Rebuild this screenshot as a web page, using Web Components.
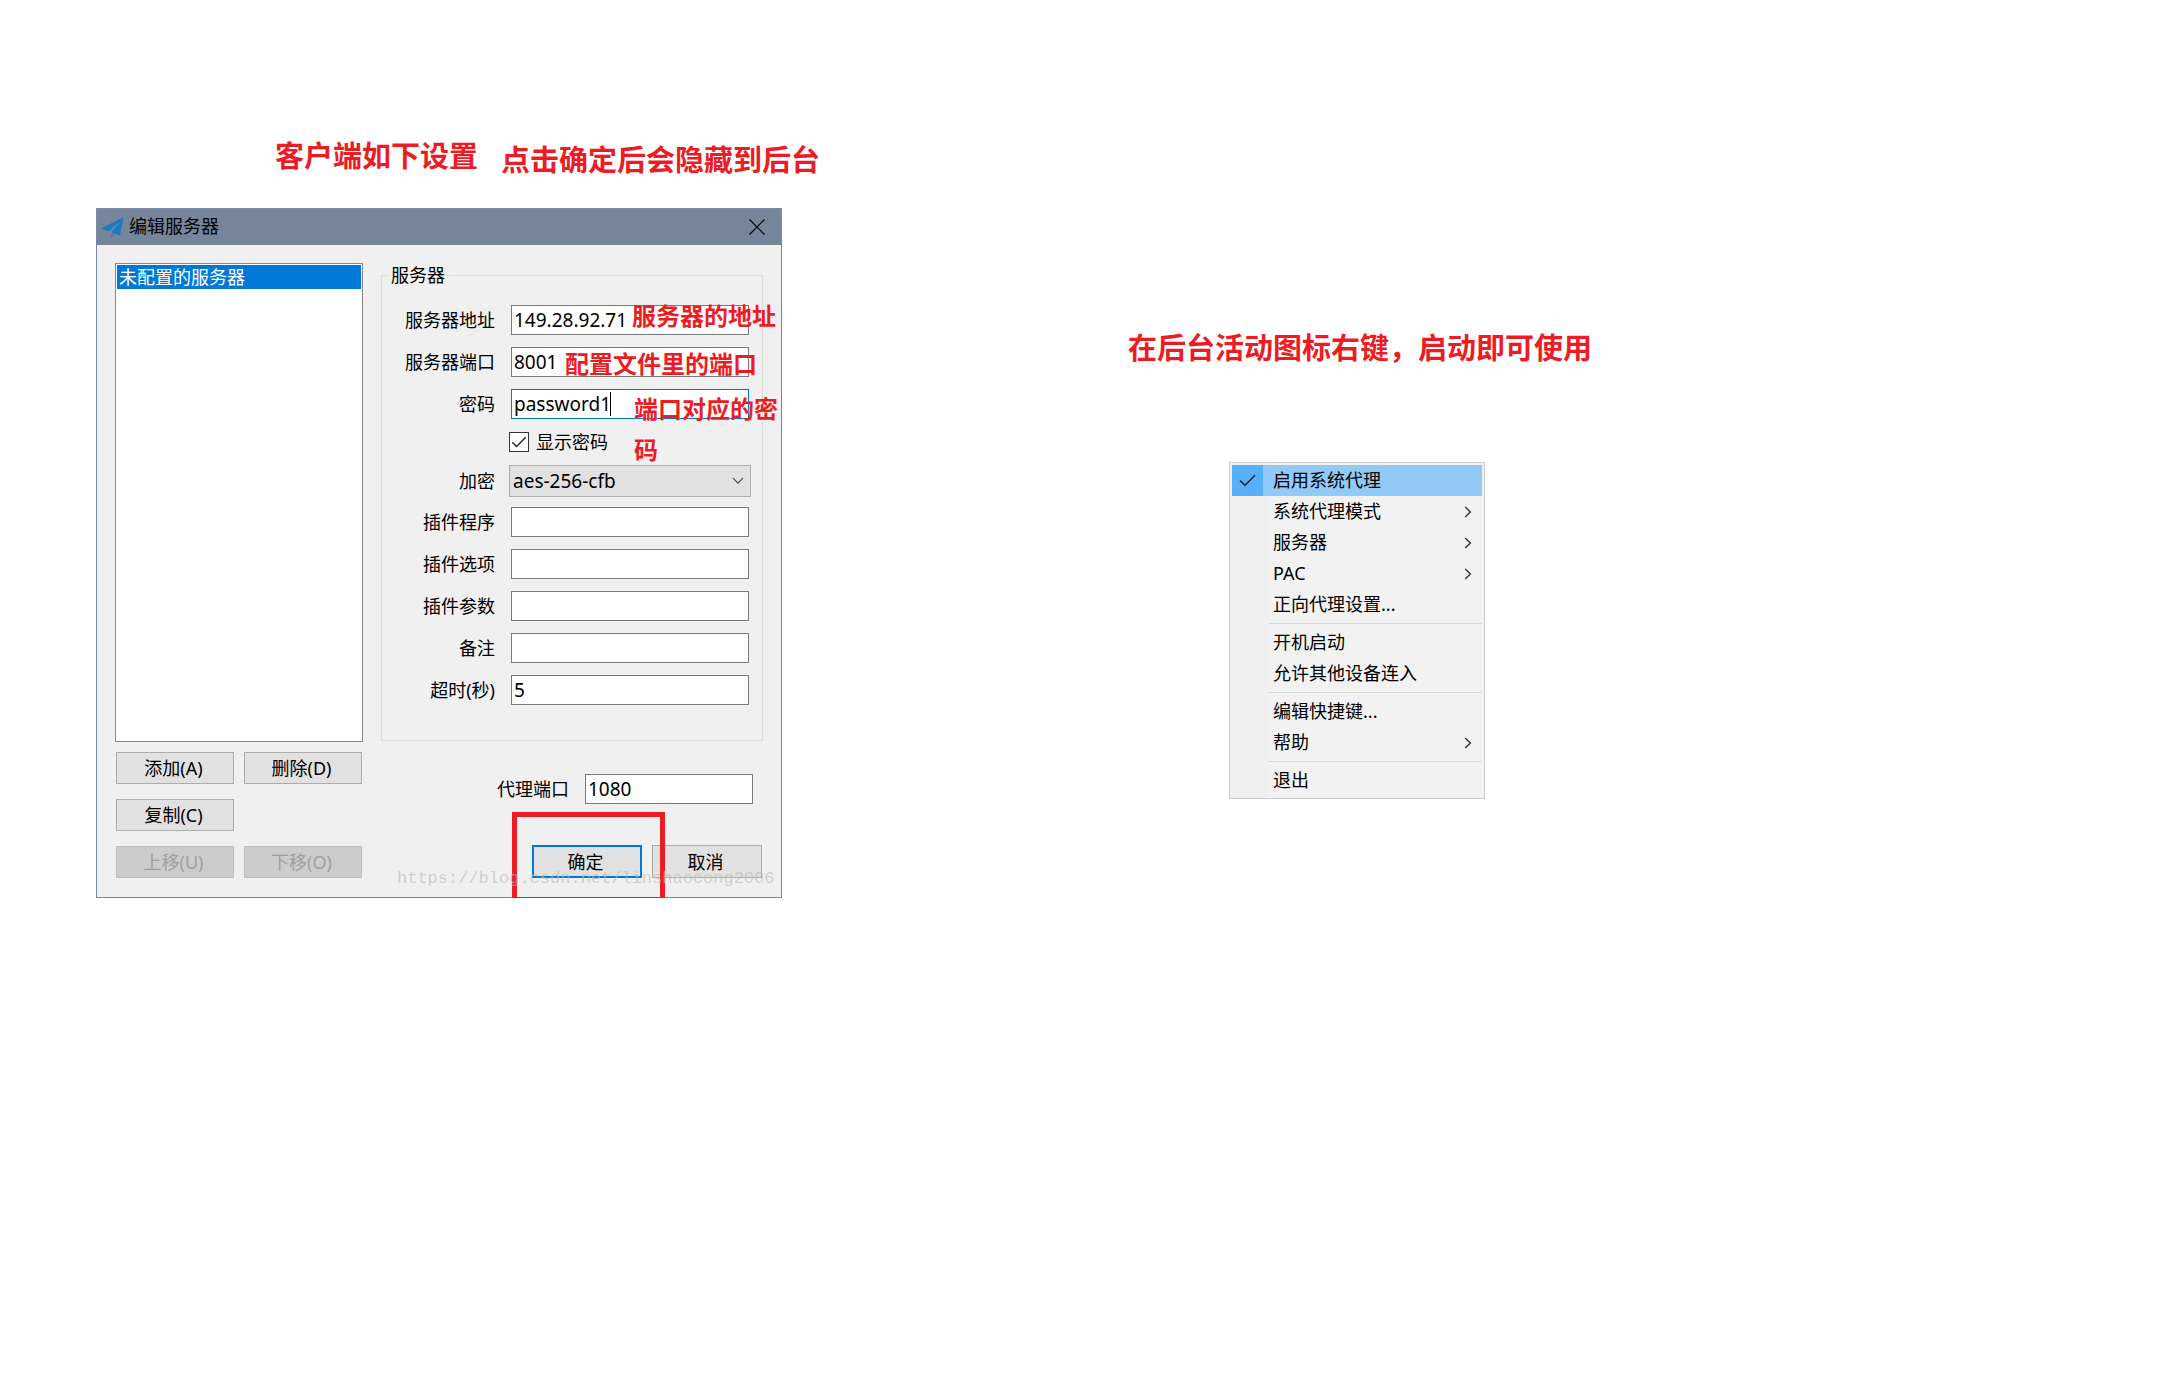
<!DOCTYPE html>
<html lang="zh-CN">
<head>
<meta charset="utf-8">
<title>编辑服务器</title>
<style>
  html, body { margin: 0; background: #fff; }
  body { font: 18px/24px "Noto Sans", "Noto Sans CJK SC", sans-serif; color: #000; }
</style>
</head>
<body>
<guide-page></guide-page>
<script>
const define = (name, html, setup) => {
  const template = document.createElement('template');
  template.innerHTML = '<style>*{box-sizing:border-box}:host{box-sizing:border-box}button,input,select{font:inherit;color:inherit;margin:0;border-radius:0}</style>' + html;
  customElements.define(name, class extends HTMLElement {
    connectedCallback() {
      if (this.shadowRoot) return;
      this.attachShadow({ mode: 'open' }).append(template.content.cloneNode(true));
      if (setup) setup(this, this.shadowRoot);
    }
  });
};

// Red remark; "size=small" is used inside the dialog.
define('red-note', `
<style>
  :host { display: block; color: #ed1c24; font: bold 29px/42px "Noto Sans CJK SC", sans-serif; white-space: nowrap; }
  :host([size=small]) { font-size: 24px; line-height: 41px; }
  p { margin: 0; }
</style>
<p><slot></slot></p>`);

define('win-button', `
<style>
  :host { display: block; }
  button { display: block; width: 100%; height: 32px; padding: 0 3px 0 0; background: #e1e1e1; border: 1px solid #adadad; }
  :host([primary]) button { border: 2px solid #0078d7; }
  :host([tall]) button { height: 33px; }
  button:disabled { background: #ccc; border-color: #bfbfbf; color: #a0a0a0; }
</style>
<button type="button"><slot></slot></button>`, (el, root) => {
  root.querySelector('button').disabled = el.hasAttribute('disabled');
});

// Label plus text box. The caret attribute marks the focused box.
define('text-field', `
<style>
  :host { display: grid; grid-template-columns: 113px 1fr; column-gap: 14px; align-items: center; }
  label { text-align: right; }
  .box { position: relative; margin: 0 2px; }
  input { display: block; width: 100%; height: 30px; padding: 0 2px; border: 1px solid #7a7a7a; background: #fff; outline: 0; font-size: 19px; }
  :host([caret]) input { border-color: #0078d7; }
  i { display: none; position: absolute; left: 99px; top: 3px; width: 1px; height: 24px; background: #000; }
  :host([caret]) i { display: block; }
</style>
<label for="t"></label><div class="box"><input id="t" type="text" autocomplete="off" spellcheck="false"><i></i></div>`, (el, root) => {
  root.querySelector('label').textContent = el.getAttribute('label');
  root.querySelector('input').value = el.getAttribute('value') || '';
});

define('select-field', `
<style>
  :host { display: grid; grid-template-columns: 113px 1fr; column-gap: 14px; align-items: center; margin-bottom: -2px; }
  label { text-align: right; }
  .box { display: grid; }
  select, svg { grid-area: 1 / 1; }
  select { appearance: none; width: 100%; height: 32px; padding: 0 3px; border: 1px solid #adadad; background: #e1e1e1; font-size: 19px; }
  svg { place-self: center end; margin-right: 7px; pointer-events: none; }
</style>
<label for="s">加密</label>
<div class="box"><select id="s"><option>aes-256-cfb</option></select>
<svg width="12" height="8" viewBox="0 0 12 8" fill="none" stroke="#444" stroke-width="1.1"><path d="M1 1.2 6 6.2 11 1.2"/></svg></div>`);

define('check-field', `
<style>
  :host { display: flex; align-items: center; gap: 7px; height: 22px; margin-left: 127px; }
  .box { display: grid; }
  input, svg { grid-area: 1 / 1; }
  input { appearance: none; width: 20px; height: 20px; border: 1px solid #333; background: #fff; }
  svg { pointer-events: none; display: none; }
  input:checked + svg { display: block; }
</style>
<span class="box"><input id="c" type="checkbox" checked><svg width="20" height="20" viewBox="0 0 20 20" fill="none" stroke="#222" stroke-width="1.4"><path d="M3.3 10.2 7.6 14.4 16.7 5.3"/></svg></span>
<label for="c">显示密码</label>`);

define('server-list', `
<style>
  :host { display: block; height: 479px; border: 1px solid #828790; padding: 1px; background: #fff; }
  ul { list-style: none; margin: 0; padding: 0; }
  li { padding: 0 2px; background: #0078d7; color: #fff; }
</style>
<ul role="listbox" aria-label="服务器"><li role="option" aria-selected="true">未配置的服务器</li></ul>`);

define('title-bar', `
<style>
  :host { display: flex; align-items: center; height: 36px; padding: 0 16px 0 4px; gap: 5px; background: #77859b; }
  h1 { flex: 1; margin: 0; padding-bottom: 2px; font: inherit; }
  button { display: block; padding: 0; border: 0; background: none; }
  svg { display: block; }
</style>
<svg width="23" height="21" viewBox="0 0 23 21" fill="#1b7cc2"><path d="M22.8 0 0 11.4 7.6 14.2 19.2 4.4 10.2 15.6 19 18.4zM10.2 17.2 10.4 20.8 12.8 17.6z"/></svg>
<h1>编辑服务器</h1>
<button type="button" aria-label="关闭"><svg width="16" height="16" viewBox="0 0 16 16" stroke="#000" stroke-width="1.1"><path d="M.5.5l15 15M15.5.5l-15 15"/></svg></button>`);

define('server-dialog', `
<style>
  :host { display: block; position: relative; width: 686px; border: 1px solid #7a8aa5; background: #f0f0f0; }
  .body { display: flex; gap: 18px; padding: 18px 18px 19px; }
  .side { width: 248px; }
  .main { flex: 1; display: flex; flex-direction: column; }
  .grid { display: grid; grid-template-columns: 1fr 1fr; gap: 15px 10px; margin: 10px 1px 0; }
  .grid .alone { grid-column: 1; }
  fieldset { min-width: 0; height: 478px; margin: 0; padding: 18px 11px 0 0; border: 1px solid #dcdcdc; }
  legend { margin-left: 5px; padding: 0 4px; }
  .rows { display: flex; flex-direction: column; gap: 12px; }
  .port { width: 299px; margin: 33px 8px 0 auto; }
  footer { display: grid; grid-template-columns: 110px 110px; gap: 10px; justify-content: end; margin: 41px 1px 0 0; }
  red-note, .ring, .mark { position: absolute; pointer-events: none; }
  .n1 { left: 535px; top: 85px; }
  .n2 { left: 468px; top: 133px; }
  .n3 { left: 537px; top: 178px; }
  .ring { left: 415px; top: 603px; width: 153px; height: 86px; border: 5px solid #ed1c24; border-bottom-width: 1px; }
  .mark { left: 300px; bottom: 6px; font: 17px/24px "Liberation Mono", monospace; color: rgba(190,190,180,.65); }
</style>
<title-bar></title-bar>
<div class="body">
  <div class="side">
    <server-list></server-list>
    <div class="grid">
      <win-button>添加(A)</win-button><win-button>删除(D)</win-button>
      <win-button class="alone">复制(C)</win-button>
      <win-button class="alone" disabled>上移(U)</win-button><win-button disabled>下移(O)</win-button>
    </div>
  </div>
  <div class="main">
    <fieldset>
      <legend>服务器</legend>
      <div class="rows">
        <text-field label="服务器地址" value="149.28.92.71"></text-field>
        <text-field label="服务器端口" value="8001"></text-field>
        <text-field label="密码" value="password1" caret></text-field>
        <check-field></check-field>
        <select-field></select-field>
        <text-field label="插件程序"></text-field>
        <text-field label="插件选项"></text-field>
        <text-field label="插件参数"></text-field>
        <text-field label="备注"></text-field>
        <text-field label="超时(秒)" value="5"></text-field>
      </div>
    </fieldset>
    <text-field class="port" label="代理端口" value="1080"></text-field>
    <footer><win-button tall primary>确定</win-button><win-button tall>取消</win-button></footer>
  </div>
</div>
<red-note class="n1" size="small">服务器的地址</red-note>
<red-note class="n2" size="small">配置文件里的端口</red-note>
<red-note class="n3" size="small">端口对应的密<br>码</red-note>
<div class="ring"></div>
<div class="mark">https://blog.csdn.net/linshaocong2006</div>`);

define('menu-item', `
<style>
  :host { display: block; }
  button { display: grid; grid-template-columns: 31px 1fr auto; column-gap: 10px; align-items: center; width: 100%; height: 31px; padding: 0 10px 0 0; border: 0; background: none; text-align: left; }
  .tick { display: grid; place-items: center; height: 31px; }
  .name { padding-bottom: 2px; }
  svg { display: none; }
  :host([checked]) button { background: #91c9f7; }
  :host([checked]) .tick { background: #56b0fa; }
  :host([checked]) .tick svg, :host([submenu]) .more { display: block; }
</style>
<button type="button" role="menuitem">
  <span class="tick"><svg width="17" height="13" viewBox="0 0 17 13" fill="none" stroke="#222" stroke-width="1.5"><path d="M1 6.5 6 11.3 16 1.3"/></svg></span>
  <span class="name"><slot></slot></span>
  <svg class="more" width="8" height="12" viewBox="0 0 8 12" fill="none" stroke="#333" stroke-width="1.4"><path d="M1.2 1 6.4 6 1.2 11"/></svg>
</button>`);

define('tray-menu', `
<style>
  :host { display: block; width: 256px; padding: 2px; border: 1px solid #ccc; background: linear-gradient(90deg, #f0f0f0 39px, #f2f2f2 39px); }
  hr { height: 1px; margin: 3px 0 3px 37px; border: 0; background: #d7d7d7; }
</style>
<div role="menu">
  <menu-item checked>启用系统代理</menu-item>
  <menu-item submenu>系统代理模式</menu-item>
  <menu-item submenu>服务器</menu-item>
  <menu-item submenu>PAC</menu-item>
  <menu-item>正向代理设置...</menu-item>
  <hr>
  <menu-item>开机启动</menu-item>
  <menu-item>允许其他设备连入</menu-item>
  <hr>
  <menu-item>编辑快捷键...</menu-item>
  <menu-item submenu>帮助</menu-item>
  <hr>
  <menu-item>退出</menu-item>
</div>`);

define('guide-page', `
<style>
  :host { display: grid; grid-template-columns: 1fr 1fr; align-items: start; min-height: 100vh; padding-left: 96px; }
  .client { padding-top: 133px; }
  .heads { display: flex; gap: 23px; padding-left: 179px; margin-bottom: 29px; }
  .lower { margin-top: 4px; }
  .tray { padding-top: 325px; }
  tray-menu { margin: 95px 0 0 101px; }
</style>
<section class="client">
  <div class="heads"><red-note>客户端如下设置</red-note><red-note class="lower">点击确定后会隐藏到后台</red-note></div>
  <server-dialog></server-dialog>
</section>
<section class="tray">
  <red-note>在后台活动图标右键，启动即可使用</red-note>
  <tray-menu></tray-menu>
</section>`);
</script>
</body>
</html>
